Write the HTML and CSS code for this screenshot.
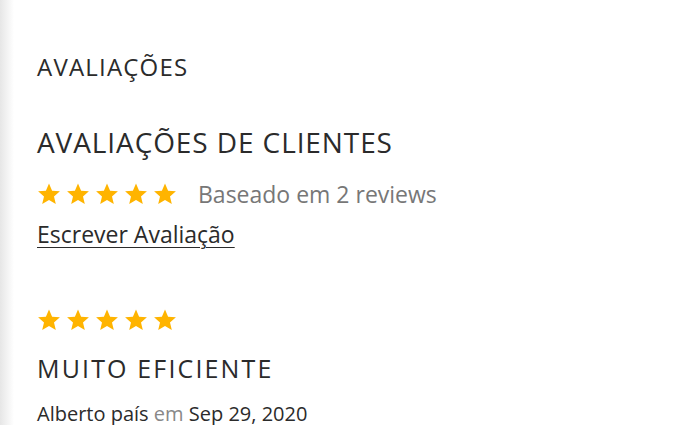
FILE: index.html
```html
<!DOCTYPE html>
<html lang="pt">
<head>
    <meta charset="UTF-8">
    <meta name="viewport" content="width=device-width, initial-scale=1.0">
    <title>Avaliações</title>
    <link rel="stylesheet" href="styles.css">
</head>
<body>
    <svg width="0" height="0" class="defs">
        <symbol id="star" viewBox="0 0 24 24">
            <path d="M12 1.5l3.1 7.2 7.8.6-5.9 5.1 1.8 7.6L12 17.9 5.2 22l1.8-7.6-5.9-5.1 7.8-.6z"/>
        </symbol>
    </svg>
    <div class="page">
        <h2 class="section-title">AVALIAÇÕES</h2>

        <div class="summary">
            <h3 class="summary-title">AVALIAÇÕES DE CLIENTES</h3>
            <div class="summary-rating">
                <span class="stars">
                    <svg><use href="#star"/></svg>
                    <svg><use href="#star"/></svg>
                    <svg><use href="#star"/></svg>
                    <svg><use href="#star"/></svg>
                    <svg><use href="#star"/></svg>
                </span>
                <span class="summary-count">Baseado em 2 reviews</span>
            </div>
            <a href="#" class="write-link">Escrever Avaliação</a>
        </div>

        <div class="review">
            <span class="stars">
                <svg><use href="#star"/></svg>
                <svg><use href="#star"/></svg>
                <svg><use href="#star"/></svg>
                <svg><use href="#star"/></svg>
                <svg><use href="#star"/></svg>
            </span>
            <h4 class="review-title">MUITO EFICIENTE</h4>
            <div class="review-meta"><b>Alberto país</b> em <b>Sep 29, 2020</b></div>
        </div>
    </div>
</body>
</html>
```

FILE: styles.css
```css
body {
    margin: 0;
    background: #fff;
    font-family: 'Open Sans', sans-serif;
    color: #2b2b2b;
}
.defs {
    position: absolute;
}
.page {
    min-height: 425px;
    box-sizing: border-box;
    padding: 51px 20px 0 37px;
    background: linear-gradient(to right, #e6e6e6 0, #fff 14px);
}
.section-title {
    margin: 0;
    font-size: 24px;
    font-weight: 400;
    letter-spacing: 1.2px;
    line-height: 32px;
}
.summary {
    margin-top: 41px;
}
.summary-title {
    margin: 0;
    font-size: 28px;
    font-weight: 400;
    letter-spacing: 0.9px;
    line-height: 36px;
}
.summary-rating {
    display: flex;
    align-items: center;
    margin-top: 18px;
}
.stars {
    display: flex;
    gap: 5px;
}
.stars svg {
    width: 24px;
    height: 24px;
    fill: #ffb400;
}
.summary-count {
    margin-left: 21px;
    font-size: 23px;
    color: #777;
}
.write-link {
    display: inline-block;
    margin-top: 8px;
    font-size: 23px;
    color: #2b2b2b;
    text-decoration: underline;
    text-decoration-thickness: 1px;
    text-underline-offset: 4px;
}
.review {
    margin-top: 58px;
}
.review-title {
    margin: 19px 0 0;
    font-size: 25px;
    font-weight: 400;
    letter-spacing: 2.15px;
    line-height: 34px;
}
.review-meta {
    margin-top: 15px;
    font-size: 20px;
    color: #888;
}
.review-meta b {
    font-weight: 400;
    color: #2b2b2b;
}
```
